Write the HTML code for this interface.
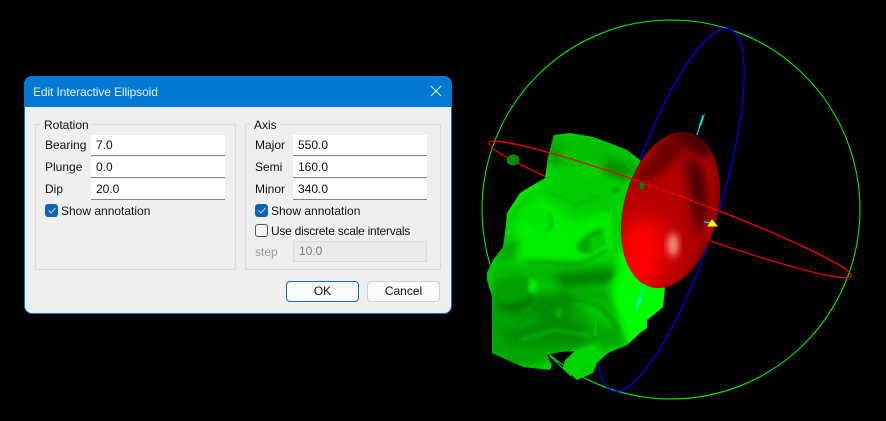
<!DOCTYPE html>
<html><head><meta charset="utf-8"><style>
html,body{margin:0;padding:0;background:#000;width:886px;height:421px;overflow:hidden;font-family:"Liberation Sans",sans-serif}
svg.s{position:absolute;left:0;top:0}
.d{position:absolute;left:24px;top:76px;width:426px;height:236px;background:#efefef;border:1px solid #0078d4;border-radius:8px;overflow:hidden;font-size:12px;color:#111}
.d *{position:absolute;box-sizing:border-box}
.t{left:0;top:0;width:426px;height:30px;background:#0078d4}
.tt{left:8px;top:8px;color:#eaf3fb;font-size:12px;letter-spacing:-.1px;white-space:nowrap}
.g{border:1px solid #dcdcdc;top:47px;height:146px}
.gl{background:#efefef;padding:0 3px;top:41px;line-height:14px;white-space:nowrap}
.l{white-space:nowrap;line-height:14px}
.i{width:134px;height:21px;background:#fff;border-bottom:1px solid #868686;padding:3px 5px;line-height:14px}
.c{width:13px;height:13px;border-radius:3px;background:#0f62b8}
.u{width:13px;height:13px;border-radius:3px;background:#f6f6f6;border:1px solid #555}
.b{top:204px;width:73px;height:21px;border-radius:4px;background:#fbfbfb;border:1px solid #d0d0d0;text-align:center;line-height:19px}
</style></head><body>
<svg class="s" width="886" height="421" viewBox="0 0 886 421">
<defs>
<clipPath id="gc"><path d="M554 135L570 133 593 137 607 142 627 150 640 160 660 200 665 287 663 307 647 320 647 328 640 333 627 345 608 353 597 363 593 373 577 380 563 368 565 360 575 351 560 352 547 355 552 365 550 370 523 367 492 353 492 297 487 280 487 273 493 260 503 247 505 233 507 213 520 193 533 185 545 178 548 157Z"/></clipPath>
<clipPath id="ec"><ellipse cx="670.5" cy="210" rx="47" ry="79.6" transform="rotate(14 670.5 210)"/></clipPath>
<filter id="b1" x="-40%" y="-40%" width="180%" height="180%"><feGaussianBlur stdDeviation="1.8"/></filter>
<filter id="b3" x="-40%" y="-40%" width="180%" height="180%"><feGaussianBlur stdDeviation="4"/></filter>
<filter id="b5" x="-50%" y="-50%" width="200%" height="200%"><feGaussianBlur stdDeviation="6"/></filter>
<filter id="b6" x="-60%" y="-60%" width="220%" height="220%"><feGaussianBlur stdDeviation="11"/></filter>
</defs>
<ellipse cx="671" cy="209.5" rx="189" ry="189.5" fill="none" stroke="#00e800" stroke-width="1.1"/>
<ellipse cx="670" cy="209.5" rx="192.8" ry="16" transform="rotate(20.2 670 209.5)" fill="none" stroke="#f00000" stroke-width="1.2"/>
<ellipse cx="671" cy="210" rx="46" ry="190" transform="rotate(18 671 210)" fill="none" stroke="#0000f0" stroke-width="1.3"/>
<ellipse cx="513" cy="160" rx="6.5" ry="5.5" fill="#078a07"/>
<g clip-path="url(#gc)">
<rect x="480" y="125" width="200" height="265" fill="#00d400"/>
<g filter="url(#b3)">
<path d="M548 135H640V180L600 165 560 170Z" fill="#00c000"/>
<path d="M550 142L562 142 560 165 548 165Z" fill="#00a000"/>
<path d="M606 156L636 168 625 182 600 172Z" fill="#009000"/>
<path d="M552 172L610 180 625 240 590 215 560 190Z" fill="#00cc00"/>
<path d="M515 225L540 195 575 222 610 210 610 250 590 260 530 258 515 258Z" fill="#00f000"/>
<path d="M505 240L520 240 515 260 495 262Z" fill="#00a800"/>
<path d="M615 260L668 200V340L630 345 612 300Z" fill="#00ff00"/>
<path d="M490 266L620 262 600 285 540 285 490 290Z" fill="#00b800"/>
<path d="M488 290H610L625 345 580 352 520 370 488 355Z" fill="#00a400"/>
<path d="M553 274L618 268 612 284 560 288Z" fill="#008000"/>
<path d="M500 295L530 285 535 305 515 315 498 310Z" fill="#007c00"/>
<path d="M535 300L570 290 570 330 540 340Z" fill="#008c00"/>
<path d="M500 330L560 320 590 325 580 345 510 345Z" fill="#008c00"/>
<path d="M575 298L605 300 618 330 590 320Z" fill="#00c400"/>
<path d="M575 360L597 350 592 375 578 380Z" fill="#00cc00"/>
</g>
<g filter="url(#b1)">
<path d="M527 263L548 262 573 265 590 260 607 250" stroke="#007800" stroke-width="1.4" fill="none"/>
<path d="M518 213L530 204 545 210 550 225 538 232 525 222Z" fill="#00e800"/>
<path d="M548 212L552 225 545 232" stroke="#00a800" stroke-width="2.5" fill="none"/>
<path d="M507 214L523 191 540 186" stroke="#00f800" stroke-width="2.5" fill="none"/>
<path d="M545 192L560 196 575 205 600 196" stroke="#00b000" stroke-width="2" fill="none"/>
<path d="M576 245L590 232 603 228 605 245 590 254 579 252Z" fill="#00a800"/>
<path d="M590 238L603 232 603 248 590 252Z" fill="#00cc00"/>
<path d="M495 280L520 275 535 283 525 300 505 304 495 298Z" fill="#00a000"/>
<path d="M530 278L538 282 534 295 528 290Z" fill="#00f000"/>
<path d="M566 298L600 306 620 330" stroke="#007000" stroke-width="1.4" fill="none"/>
<path d="M520 340L555 330 590 335" stroke="#00c800" stroke-width="2" fill="none"/>
<path d="M520 322L545 300" stroke="#007800" stroke-width="2" fill="none"/>
<path d="M570 352L600 342 597 362 575 375Z" fill="#00d800"/>
<ellipse cx="559" cy="313" rx="3" ry="5" fill="#00c000"/>
<ellipse cx="616" cy="190" rx="3.5" ry="2.5" fill="#009800"/>
</g>
</g>
<path d="M550 356L571 376" stroke="#00e800" stroke-width="1" fill="none"/>
<path d="M596 317L595 336" stroke="#00c400" stroke-width="2.5"/>
<g clip-path="url(#ec)">
<rect x="610" y="125" width="120" height="170" fill="#b40000"/>
<ellipse cx="640" cy="255" rx="26" ry="40" transform="rotate(14 640 255)" fill="#ff0000" filter="url(#b6)"/>
<path d="M630 185L665 135 685 130 685 150 660 175Z" fill="#700000" filter="url(#b3)"/>
<path d="M670 125H712V160L690 150Z" fill="#4c0000" filter="url(#b3)"/>
<path d="M686 150L702 172 706 210 698 240 694 200Z" fill="#1c0000" filter="url(#b5)"/>
<path d="M712 150H730V225H714L716 190Z" fill="#800000" filter="url(#b3)"/>
<path d="M704 240L695 262 680 295H720V240Z" fill="#780000" filter="url(#b3)"/>
<ellipse cx="673" cy="245" rx="5" ry="12" fill="#ff9a88" filter="url(#b3)"/>
<ellipse cx="673" cy="245" rx="3" ry="8" fill="#e88070" filter="url(#b1)" opacity=".7"/>
</g>
<path d="M489 143A192.8 16 20.2 0 1 851 276" fill="none" stroke="#f00000" stroke-width="1.2"/>
<path d="M703 115L697 135" stroke="#00e0f0" stroke-width="1.2"/>
<path d="M705.500 112L699 125 701 126Z" fill="#00f0ff"/>
<path d="M643 287L636 310" stroke="#00e0f0" stroke-width="1.2"/>
<path d="M640 296L637 306 641 301Z" fill="#00f0ff" stroke="#00f0ff"/>
<path d="M704 222L711 223" stroke="#20d0f0" stroke-width="1.2"/>
<path d="M712 220L717 226H708Z" fill="#ffff00" stroke="#ffff00"/>
<path d="M639 182L645 184 643 190 640 189Z" fill="#0a7a1a"/>
</svg>
<div class="d">
<div class="t"></div><div class="tt">Edit Interactive Ellipsoid</div>
<svg style="left:405px;top:8px" width="12" height="12" viewBox="0 0 12 12"><path d="M1 1L11 11M11 1L1 11" stroke="#e8f2fa" stroke-width="1"/></svg>
<div class="g" style="left:10px;width:201px"></div>
<div class="gl" style="left:16px">Rotation</div>
<div class="l" style="left:20px;top:61px">Bearing</div><div class="i" style="left:66px;top:58px">7.0</div>
<div class="l" style="left:20px;top:83px">Plunge</div><div class="i" style="left:66px;top:80px">0.0</div>
<div class="l" style="left:20px;top:105px">Dip</div><div class="i" style="left:66px;top:102px">20.0</div>
<div class="c" style="left:20px;top:127px"><svg style="left:3px;top:3px" width="8" height="7" viewBox="0 0 8 7"><path d="M0.500 3.500L3 6 7.500 1" fill="none" stroke="#b8d2ee" stroke-width="1"/></svg></div>
<div class="l" style="left:36px;top:127px">Show annotation</div>
<div class="g" style="left:220px;width:196px"></div>
<div class="gl" style="left:226px">Axis</div>
<div class="l" style="left:230px;top:61px">Major</div><div class="i" style="left:268px;top:58px">550.0</div>
<div class="l" style="left:230px;top:83px">Semi</div><div class="i" style="left:268px;top:80px">160.0</div>
<div class="l" style="left:230px;top:105px">Minor</div><div class="i" style="left:268px;top:102px">340.0</div>
<div class="c" style="left:230px;top:127px"><svg style="left:3px;top:3px" width="8" height="7" viewBox="0 0 8 7"><path d="M0.500 3.500L3 6 7.500 1" fill="none" stroke="#b8d2ee" stroke-width="1"/></svg></div>
<div class="l" style="left:246px;top:127px">Show annotation</div>
<div class="u" style="left:230px;top:147px"></div>
<div class="l" style="left:246px;top:147px;letter-spacing:-.25px">Use discrete scale intervals</div>
<div class="l" style="left:230px;top:168px;color:#9a9a9a">step</div>
<div class="i" style="left:268px;top:164px;height:21px;background:#eaeaea;border:1px solid #dadada;color:#7c7c7c;padding:2px 5px">10.0</div>
<div class="b" style="left:261px;border:1px solid #0a6cc4">OK</div>
<div class="b" style="left:342px">Cancel</div>
</div>
</body></html>
